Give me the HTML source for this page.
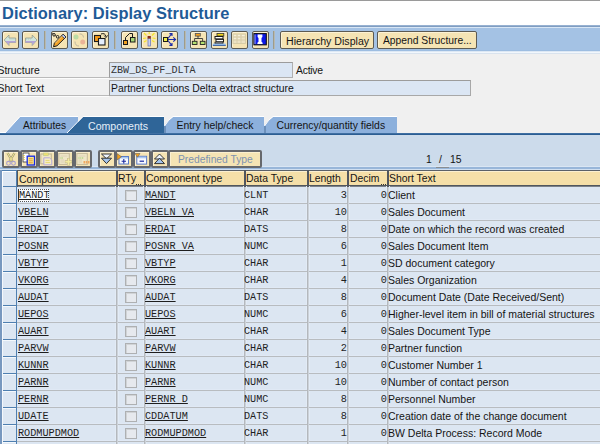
<!DOCTYPE html><html><head><meta charset="utf-8"><style>
*{margin:0;padding:0;box-sizing:border-box}
html,body{width:600px;height:444px;overflow:hidden;background:#f0f0f0;font-family:"Liberation Sans",sans-serif;position:relative}
.a{position:absolute}
.t{position:absolute;white-space:nowrap;font-size:10.4px;line-height:20px;color:#141414}
.m{position:absolute;white-space:nowrap;font-family:"Liberation Mono",monospace;font-size:11px;line-height:20px;color:#1e1e1e;transform-origin:0 0;transform:scaleX(0.927)}
.mr{transform-origin:100% 0}
.u{text-decoration:underline}
.btn{position:absolute;top:31px;width:17px;height:18px;background:#f5e4b4;border:1px solid #5c5a52;border-radius:2px;box-shadow:inset 1px 1px 0 #fcf2d4}
.sep{position:absolute;top:31px;width:1px;height:18px;background:#9e9c8a;box-shadow:1px 0 0 #b6b9b4}
.tb{position:absolute;top:150px;width:18px;height:18px;background:#f5e4b4;border:2px solid #66686c;border-radius:2px;box-shadow:inset 1px 1px 0 #fbf0d0}
.tb svg,.btn svg{position:absolute;left:0;top:0}
.cb{position:absolute;width:12px;height:11px;background:#e6e9ee;border:1px solid #aeb0b2;box-shadow:inset 1px 1px 0 #d0d3d6}
</style></head><body>
<div class="a" style="left:0;top:0;width:600px;height:1px;background:#9a9a9a"></div>
<div class="a" style="left:0;top:1px;width:600px;height:24px;background:#fff"></div>
<div class="a" style="left:2px;top:3px;font-weight:bold;font-size:16.4px;letter-spacing:0.05px;line-height:20px;color:#1f5b97;white-space:nowrap">Dictionary: Display Structure</div>
<div class="a" style="left:0;top:25px;width:600px;height:1px;background:#98b2d2"></div>
<div class="a" style="left:0;top:26px;width:600px;height:1px;background:#7f9dc1"></div>
<div class="a" style="left:0;top:27px;width:600px;height:1px;background:#d8e6f5"></div>
<div class="a" style="left:0;top:28px;width:600px;height:22px;background:#a4c2e4"></div>
<div class="a" style="left:0;top:50px;width:600px;height:1px;background:#9dbde1"></div>
<div class="a" style="left:0;top:51px;width:600px;height:1px;background:#dde8f4"></div>
<div class="a" style="left:0;top:52px;width:600px;height:1px;background:#f2f7fc"></div>
<div class="a" style="left:0;top:53px;width:600px;height:1px;background:#d9e3ee"></div>
<div class="btn" style="left:2px;width:17px"><svg width="15" height="16"><path d="M1.2,8 L6,3 L6,6 L12.7,6 L12.7,10.5 L6,10.5 L6,13.5 Z" fill="#d2e6dc" stroke="#8a9488" stroke-width="0.7"/><path d="M2.2,9 L6,13 L6,10.5 L12.7,10.5 L12.7,9 Z" fill="#b4a4d8"/><path d="M6.5,7 L12,7" stroke="#a8b8b0" stroke-width="0.6" stroke-dasharray="1,1"/></svg></div>
<div class="btn" style="left:22px;width:17px"><svg width="15" height="16"><path d="M14,8 L9.2,3 L9.2,6 L2.5,6 L2.5,10.5 L9.2,10.5 L9.2,13.5 Z" fill="#d2e6dc" stroke="#8a9488" stroke-width="0.7"/><path d="M13,9 L9.2,13 L9.2,10.5 L2.5,10.5 L2.5,9 Z" fill="#b4a4d8"/><path d="M3,7 L8.5,7" stroke="#a8b8b0" stroke-width="0.6" stroke-dasharray="1,1"/></svg></div>
<div class="btn" style="left:51px;width:17px"><svg width="15" height="16"><path d="M11.2,2.2 L14,5 L5,13.8 L1.5,14.8 L2.4,11.2 Z" fill="#f4a428" stroke="#222" stroke-width="1"/><path d="M11.2,2.2 L14,5 L12.4,6.6 L9.6,3.8 Z" fill="#b8c8f0" stroke="#222" stroke-width="0.8"/><path d="M3.5,11 L10.5,4" stroke="#ffd890" stroke-width="0.8"/><circle cx="2" cy="2.8" r="1.3" fill="none" stroke="#222" stroke-width="1"/><circle cx="5.6" cy="4.8" r="1.3" fill="none" stroke="#222" stroke-width="1"/><path d="M3.2,3.5 L4.4,4.2 M0,1.5 L1,2" stroke="#222" stroke-width="0.9"/></svg></div>
<div class="btn" style="left:71px;width:17px"><svg width="15" height="16"><circle cx="4" cy="5" r="2.5" fill="#bcdca4"/><circle cx="10.7" cy="10" r="2.5" fill="#eab498"/><path d="M7.5,2 Q11,1.5 11.5,5.5 M7,14 Q3,14 3,9.5" stroke="#bab4a0" stroke-width="0.9" fill="none"/></svg></div>
<div class="btn" style="left:92px;width:17px"><svg width="15" height="16"><rect x="1.5" y="3.5" width="6" height="6" fill="#f49a18" stroke="#1a1a1a" stroke-width="1.1"/><rect x="5.5" y="6.5" width="6.5" height="6.5" fill="#e4eefc" stroke="#1a1a1a" stroke-width="1.1"/><path d="M8,2 Q12,0.5 13,4.5" stroke="#1a1a1a" stroke-width="1" fill="none"/><path d="M11.2,3.6 L13,5.6 L14.6,3.4" stroke="#1a1a1a" stroke-width="0.9" fill="none"/></svg></div>
<div class="btn" style="left:121px;width:17px"><svg width="15" height="16"><rect x="1.5" y="8.5" width="4" height="4" fill="#f0a020" stroke="#1a1a1a" stroke-width="1"/><rect x="8.5" y="5.5" width="4.5" height="4.5" fill="#a8d878" stroke="#1a1a1a" stroke-width="1"/><path d="M3.5,8.5 L3.5,5.5 L7.5,1.5 L10.5,1.5 L10.5,5.5" stroke="#1a1a1a" stroke-width="1" fill="none"/></svg></div>
<div class="btn" style="left:141px;width:17px"><svg width="15" height="16"><path d="M2,1 L4.5,3.5 M12.5,1 L10,3.5 M1,6.5 L4,6 M13.5,6.5 L10.5,6 M2,10 L4.5,8.5 M12.5,10 L10,8.5 M7.2,0 L7.2,2" stroke="#f4e428" stroke-width="1.1"/><rect x="6" y="6" width="2.5" height="8" fill="#c8d0f0" stroke="#6070b8" stroke-width="0.7"/><rect x="5.6" y="4" width="3.2" height="2.6" fill="#8a3018"/></svg></div>
<div class="btn" style="left:161px;width:17px"><svg width="15" height="16"><path d="M5.5,7.5 L13.5,7.5 M11.3,5.3 L13.6,7.5 L11.3,9.7 M5.5,7 L9.6,1.8 M7.4,1.6 L10,1.5 L10,4.1 M5.5,8 L9.6,13.2 M7.4,13.4 L10,13.5 L10,10.9" stroke="#1c2ca8" stroke-width="1.1" fill="none"/><rect x="1.5" y="5.5" width="4" height="4" fill="#f0ec48" stroke="#1a1a1a" stroke-width="1"/></svg></div>
<div class="btn" style="left:190px;width:17px"><svg width="15" height="16"><rect x="4.3" y="1.5" width="5" height="2.6" fill="#f4a020" stroke="#555" stroke-width="0.8"/><path d="M7,4 L7,6.5 M3.6,6.5 L11.6,6.5 M3.6,6.5 L3.6,9.3 M11.6,6.5 L11.6,9.3" stroke="#333" stroke-width="0.9" fill="none"/><rect x="1.3" y="9.3" width="4.7" height="3.2" fill="#b4e070" stroke="#222" stroke-width="0.9"/><rect x="9.3" y="9.3" width="4.7" height="3.2" fill="#b4e070" stroke="#222" stroke-width="0.9"/></svg></div>
<div class="btn" style="left:211px;width:17px"><svg width="15" height="16"><rect x="5" y="1.5" width="6.8" height="2.5" fill="#f4d818" stroke="#333" stroke-width="0.8"/><rect x="3" y="4.5" width="8" height="2.4" fill="#fff" stroke="#1a1a1a" stroke-width="1"/><rect x="4" y="7.4" width="7.5" height="2.4" fill="#fff" stroke="#1a1a1a" stroke-width="1"/><rect x="3" y="10.2" width="8" height="1.4" fill="#fff" stroke="#1a1a1a" stroke-width="0.8"/><rect x="0.8" y="11.6" width="13" height="1.6" fill="#9cc4f0"/><path d="M0.8,13.4 L13.8,13.4" stroke="#2050a0" stroke-width="0.9"/></svg></div>
<div class="btn" style="left:231px;width:17px"><svg width="15" height="16"><rect x="1" y="2" width="12.5" height="9.5" fill="#ece2c4" stroke="#d6caa4" stroke-width="0.9"/><path d="M1,5 L13.5,5 M1,8 L13.5,8 M5,2 L5,11.5 M9,2 L9,11.5" stroke="#d6caa4" stroke-width="0.8"/><path d="M2,3.5 L4,3.5 M6,3.5 L8,3.5 M10,3.5 L12.5,3.5 M2,6.5 L4,6.5 M6,6.5 L8,6.5" stroke="#f8f2e0" stroke-width="0.8"/></svg></div>
<div class="btn" style="left:252px;width:17px"><svg width="15" height="16"><rect x="0.9" y="1.6" width="12.4" height="11.2" fill="#0c18e8" stroke="#101018" stroke-width="1.1"/><path d="M2,2.5 L2,12" stroke="#c8d4f8" stroke-width="0.8"/><path d="M4.6,2.6 L9.4,2.6 L9.4,5 L8.5,6 L8.5,9.8 L9.6,10.8 L9.6,12 L4.4,12 L4.4,10.8 L5.5,9.8 L5.5,6 L4.6,5 Z" fill="#fff"/></svg></div>
<div class="sep" style="left:44px"></div>
<div class="sep" style="left:114px"></div>
<div class="sep" style="left:184px"></div>
<div class="sep" style="left:273px"></div>
<div class="btn" style="left:280px;width:94px"></div>
<div class="t" style="left:286px;top:31px;font-size:10.62px">Hierarchy Display</div>
<div class="btn" style="left:377px;width:100px"></div>
<div class="t" style="left:383px;top:31px;font-size:10.3px">Append Structure...</div>
<div class="t" style="left:-2.5px;top:61px">Structure</div>
<div class="a" style="left:0;top:77px;width:109px;height:1px;background:#bababa"></div>
<div class="a" style="left:0;top:78px;width:109px;height:1px;background:#fcfcfc"></div>
<div class="a" style="left:109px;top:62px;width:184px;height:16px;background:#dbe6f4;border:1px solid #9c9c9c;border-right-color:#b0b0b0;border-bottom-color:#b0b0b0"></div>
<div class="m" style="left:111px;top:59.5px;font-size:11.2px;color:#333;transform:scaleX(0.9)">ZBW_DS_PF_DLTA</div>
<div class="t" style="left:296px;top:61px;letter-spacing:-0.25px">Active</div>
<div class="t" style="left:-2.5px;top:79px">Short Text</div>
<div class="a" style="left:0;top:95px;width:109px;height:1px;background:#bababa"></div>
<div class="a" style="left:0;top:96px;width:109px;height:1px;background:#fcfcfc"></div>
<div class="a" style="left:109px;top:80px;width:362px;height:16px;background:#dbe6f4;border:1px solid #9c9c9c;border-right-color:#a8a8a8;border-bottom-color:#a8a8a8"></div>
<div class="t" style="left:111px;top:79px;font-size:10.38px">Partner functions Delta extract structure</div>
<div class="a" style="left:0;top:133px;width:600px;height:1px;background:#3f6fa2"></div>
<div class="a" style="left:0;top:134px;width:600px;height:1px;background:#2b5d92"></div>
<div class="a" style="left:0;top:135px;width:600px;height:309px;background:#ccdbeb"></div>
<svg class="a" style="left:0;top:115px" width="600" height="20">
<path d="M0,17.5 L5,17.5" stroke="#fff" stroke-width="1"/>
<polygon points="5,18 20,2 78,2 78,18" fill="#8cb0dc"/>
<path d="M5,18 L20,1.5 L78,1.5" stroke="#fff" stroke-width="1" fill="none"/>
<path d="M164,18 L164,11 Q168,5 173,2 L264,2 L264,18 Z" fill="#8cb0dc"/>
<path d="M164.5,11 Q168.5,4.5 173,1.5 L264,1.5" stroke="#fff" stroke-width="1" fill="none"/>
<rect x="164" y="11" width="2" height="7" fill="#6b8fba"/>
<path d="M264,18 L264,11 Q268,5 273,2 L397,2 L397,18 Z" fill="#8cb0dc"/>
<path d="M264.5,11 Q268.5,4.5 273,1.5 L397,1.5" stroke="#fff" stroke-width="1" fill="none"/>
<rect x="264" y="11" width="2" height="7" fill="#6b8fba"/>
<polygon points="67,18 83,2 164,2 164,18" fill="#2f6598"/>
<path d="M67,18 L83,1.5 L164,1.5" stroke="#fff" stroke-width="1" fill="none"/>
<path d="M70,15 L78,7" stroke="#8cb0dc" stroke-width="0.8" stroke-dasharray="1,1" opacity="0.6"/>
</svg>
<div class="t" style="left:23px;top:116px;font-size:10.2px">Attributes</div>
<div class="t" style="left:88px;top:116px;color:#e4eef9;font-size:10.6px">Components</div>
<div class="t" style="left:176.5px;top:116px;font-size:10.42px">Entry help/check</div>
<div class="t" style="left:276.5px;top:116px;font-size:10.4px">Currency/quantity fields</div>
<div class="a" style="left:0;top:166px;width:600px;height:1px;background:#dae6f3"></div>
<div class="a" style="left:0;top:167px;width:600px;height:2px;background:#98b6d9"></div>
<div class="a" style="left:0;top:169px;width:600px;height:1px;background:#d0dff0"></div>
<div class="tb" style="left:2px"><svg width="14" height="14"><path d="M3.5,1 L8.5,9.5 M10.5,1 L5.5,9.5" stroke="#9a9478" stroke-width="2.2"/><path d="M3.5,1 L8.5,9.5 M10.5,1 L5.5,9.5" stroke="#f4e890" stroke-width="1"/><circle cx="4.5" cy="11.3" r="1.9" fill="none" stroke="#a8a0d0" stroke-width="1.1"/><circle cx="9.5" cy="11.3" r="1.9" fill="none" stroke="#a8a0d0" stroke-width="1.1"/></svg></div>
<div class="tb" style="left:20px"><svg width="14" height="14"><rect x="1" y="1" width="6" height="9" fill="#fff" stroke="#333" stroke-width="0.8"/><path d="M2,3 L2,9" stroke="#e0c020" stroke-width="1.2" stroke-dasharray="1,1"/><rect x="5.2" y="4.2" width="7.3" height="8.8" fill="#f6e890" stroke="#1428e8" stroke-width="1.3"/><path d="M6.8,6.8 L10.8,6.8 M6.8,8.8 L10.8,8.8 M6.8,10.8 L10.8,10.8" stroke="#e09030" stroke-width="0.9"/></svg></div>
<div class="tb" style="left:38px"><svg width="14" height="14"><rect x="0.8" y="2" width="10.5" height="9.8" fill="#f0e6c4" stroke="#c4b894" stroke-width="1.1"/><rect x="3.5" y="1" width="5" height="2.6" fill="#f0e070" stroke="#b8c890" stroke-width="0.6"/><path d="M3.8,5.8 L3.8,12.8 L11.8,12.8 L11.8,8 L9.5,5.8 Z" fill="#f4ecc4" stroke="#b4a8dc" stroke-width="1"/><path d="M5.5,8.5 L9.5,8.5 M5.5,10.5 L10,10.5" stroke="#e8d870" stroke-width="0.9"/></svg></div>
<div class="tb" style="left:56px"><svg width="14" height="14"><rect x="0.8" y="1.5" width="10.5" height="11" fill="#efe6c8" stroke="#c8bc9c" stroke-width="1.1"/><path d="M2.5,4 L9.5,4" stroke="#d8ccb0" stroke-width="0.8"/><path d="M2.5,6 L5,6" stroke="#90cc60" stroke-width="1.1" stroke-dasharray="1,0.8"/><path d="M2.5,8 L6,8 M2.5,10 L6,10" stroke="#d8ccb0" stroke-width="0.8"/><path d="M10.5,6 L10.5,13.5 M6.8,9.8 L14,9.8" stroke="#c8bc90" stroke-width="3"/><path d="M10.5,6.5 L10.5,13 M7.3,9.8 L13.5,9.8" stroke="#f4eca0" stroke-width="1.6"/></svg></div>
<div class="tb" style="left:74px"><svg width="14" height="14"><rect x="0.8" y="1.5" width="10.5" height="11" fill="#efe6c8" stroke="#c8bc9c" stroke-width="1.1"/><path d="M2.5,4 L9.5,4" stroke="#d8ccb0" stroke-width="0.8"/><path d="M2.5,6 L8,6" stroke="#90cc60" stroke-width="1.1" stroke-dasharray="1,0.8"/><path d="M2.5,8 L6,8 M2.5,10 L6,10" stroke="#d8ccb0" stroke-width="0.8"/><path d="M7.5,10.2 L14,10.2" stroke="#f0a860" stroke-width="2.4" stroke-dasharray="1.6,0.6"/></svg></div>
<div class="tb" style="left:98px"><svg width="14" height="14"><path d="M1.5,2 L11.5,2 L6.5,6.8 Z" fill="#eef4fc" stroke="#222" stroke-width="0.9"/><path d="M1.5,6.2 L11.5,6.2 L6.5,11.6 Z" fill="#a4c4ec" stroke="#222" stroke-width="0.9"/></svg></div>
<div class="tb" style="left:115px"><svg width="14" height="14"><rect x="2" y="4.5" width="9.5" height="7.5" fill="#f8faff" stroke="#5a7cc8" stroke-width="1"/><rect x="2.5" y="5" width="8.5" height="1.5" fill="#a8c8f0"/><path d="M6.8,7 L6.8,11.5 M4.6,9.2 L9,9.2" stroke="#1a2aa0" stroke-width="1.1"/><path d="M0,1.5 L4.5,4.8 L0,8 Z" fill="#f0a020" stroke="#555" stroke-width="0.5"/></svg></div>
<div class="tb" style="left:133px"><svg width="14" height="14"><rect x="1.8" y="4.3" width="9.8" height="7.8" fill="#f8faff" stroke="#5a7cc8" stroke-width="1"/><rect x="2.3" y="4.8" width="8.8" height="1.5" fill="#a8c8f0"/><path d="M4.6,9.2 L9,9.2" stroke="#1a2aa0" stroke-width="1.2"/><path d="M0,1.5 L5,1.5 L2.5,5.3 Z" fill="#f0a020" stroke="#555" stroke-width="0.5"/></svg></div>
<div class="tb" style="left:151px"><svg width="14" height="14"><path d="M1.5,7 L11.5,7 L6.5,2 Z" fill="#eef4fc" stroke="#222" stroke-width="0.9"/><path d="M1.5,11.6 L11.5,11.6 L6.5,6.2 Z" fill="#a4c4ec" stroke="#222" stroke-width="0.9"/></svg></div>
<div class="tb" style="left:168px;width:94px"></div>
<div class="t" style="left:178px;top:150px;color:#7d93b0;font-size:10.3px">Predefined Type</div>
<div class="t" style="left:426px;top:150px">1</div>
<div class="t" style="left:439px;top:150px">/</div>
<div class="t" style="left:450px;top:150px">15</div>
<div class="a" style="left:436px;top:167px;width:13px;height:1px;background:#8a8e92"></div>
<div class="a" style="left:0;top:170px;width:600px;height:17px;background:#f5dfa8;border-top:1px solid #5a6068;border-bottom:2px solid #50565e"></div>
<div class="a" style="left:0;top:186px;width:600px;height:1px;background:#7c828a"></div>
<div class="a" style="left:17px;top:171px;width:583px;height:1px;background:#fbefd0"></div>
<div class="a" style="left:0;top:187px;width:600px;height:257px;background:#dce6f2"></div>
<div class="a" style="left:0;top:170px;width:2px;height:274px;background:#7898bf"></div>
<div class="a" style="left:2px;top:170px;width:14px;height:17px;background:#dce6f2;border-top:1px solid #4f7fb0;border-bottom:1px solid #4f7fb0;box-shadow:inset 1px 1px 0 #fff"></div>
<div class="a" style="left:16px;top:170px;width:1px;height:274px;background:#4f7fb0"></div>
<div class="a" style="left:115px;top:186px;width:4px;height:258px;background:#e2ebf6"></div>
<div class="a" style="left:143px;top:186px;width:4px;height:258px;background:#e2ebf6"></div>
<div class="a" style="left:243px;top:186px;width:4px;height:258px;background:#e2ebf6"></div>
<div class="a" style="left:306px;top:186px;width:4px;height:258px;background:#e2ebf6"></div>
<div class="a" style="left:346px;top:186px;width:4px;height:258px;background:#e2ebf6"></div>
<div class="a" style="left:386px;top:186px;width:4px;height:258px;background:#e2ebf6"></div>
<div class="a" style="left:17px;top:202px;width:583px;height:1px;background:#e0e9f5"></div>
<div class="a" style="left:17px;top:203px;width:583px;height:1px;background:#b8bcc0"></div>
<div class="a" style="left:2px;top:203px;width:14px;height:1px;background:#4f7fb0"></div>
<div class="a" style="left:3px;top:204px;width:13px;height:1px;background:#f4f8fc"></div>
<div class="a" style="left:17px;top:219px;width:583px;height:1px;background:#e0e9f5"></div>
<div class="a" style="left:17px;top:220px;width:583px;height:1px;background:#b8bcc0"></div>
<div class="a" style="left:2px;top:220px;width:14px;height:1px;background:#4f7fb0"></div>
<div class="a" style="left:3px;top:221px;width:13px;height:1px;background:#f4f8fc"></div>
<div class="a" style="left:17px;top:236px;width:583px;height:1px;background:#e0e9f5"></div>
<div class="a" style="left:17px;top:237px;width:583px;height:1px;background:#b8bcc0"></div>
<div class="a" style="left:2px;top:237px;width:14px;height:1px;background:#4f7fb0"></div>
<div class="a" style="left:3px;top:238px;width:13px;height:1px;background:#f4f8fc"></div>
<div class="a" style="left:17px;top:253px;width:583px;height:1px;background:#e0e9f5"></div>
<div class="a" style="left:17px;top:254px;width:583px;height:1px;background:#b8bcc0"></div>
<div class="a" style="left:2px;top:254px;width:14px;height:1px;background:#4f7fb0"></div>
<div class="a" style="left:3px;top:255px;width:13px;height:1px;background:#f4f8fc"></div>
<div class="a" style="left:17px;top:270px;width:583px;height:1px;background:#e0e9f5"></div>
<div class="a" style="left:17px;top:271px;width:583px;height:1px;background:#b8bcc0"></div>
<div class="a" style="left:2px;top:271px;width:14px;height:1px;background:#4f7fb0"></div>
<div class="a" style="left:3px;top:272px;width:13px;height:1px;background:#f4f8fc"></div>
<div class="a" style="left:17px;top:287px;width:583px;height:1px;background:#e0e9f5"></div>
<div class="a" style="left:17px;top:288px;width:583px;height:1px;background:#b8bcc0"></div>
<div class="a" style="left:2px;top:288px;width:14px;height:1px;background:#4f7fb0"></div>
<div class="a" style="left:3px;top:289px;width:13px;height:1px;background:#f4f8fc"></div>
<div class="a" style="left:17px;top:304px;width:583px;height:1px;background:#e0e9f5"></div>
<div class="a" style="left:17px;top:305px;width:583px;height:1px;background:#b8bcc0"></div>
<div class="a" style="left:2px;top:305px;width:14px;height:1px;background:#4f7fb0"></div>
<div class="a" style="left:3px;top:306px;width:13px;height:1px;background:#f4f8fc"></div>
<div class="a" style="left:17px;top:321px;width:583px;height:1px;background:#e0e9f5"></div>
<div class="a" style="left:17px;top:322px;width:583px;height:1px;background:#b8bcc0"></div>
<div class="a" style="left:2px;top:322px;width:14px;height:1px;background:#4f7fb0"></div>
<div class="a" style="left:3px;top:323px;width:13px;height:1px;background:#f4f8fc"></div>
<div class="a" style="left:17px;top:338px;width:583px;height:1px;background:#e0e9f5"></div>
<div class="a" style="left:17px;top:339px;width:583px;height:1px;background:#b8bcc0"></div>
<div class="a" style="left:2px;top:339px;width:14px;height:1px;background:#4f7fb0"></div>
<div class="a" style="left:3px;top:340px;width:13px;height:1px;background:#f4f8fc"></div>
<div class="a" style="left:17px;top:355px;width:583px;height:1px;background:#e0e9f5"></div>
<div class="a" style="left:17px;top:356px;width:583px;height:1px;background:#b8bcc0"></div>
<div class="a" style="left:2px;top:356px;width:14px;height:1px;background:#4f7fb0"></div>
<div class="a" style="left:3px;top:357px;width:13px;height:1px;background:#f4f8fc"></div>
<div class="a" style="left:17px;top:372px;width:583px;height:1px;background:#e0e9f5"></div>
<div class="a" style="left:17px;top:373px;width:583px;height:1px;background:#b8bcc0"></div>
<div class="a" style="left:2px;top:373px;width:14px;height:1px;background:#4f7fb0"></div>
<div class="a" style="left:3px;top:374px;width:13px;height:1px;background:#f4f8fc"></div>
<div class="a" style="left:17px;top:389px;width:583px;height:1px;background:#e0e9f5"></div>
<div class="a" style="left:17px;top:390px;width:583px;height:1px;background:#b8bcc0"></div>
<div class="a" style="left:2px;top:390px;width:14px;height:1px;background:#4f7fb0"></div>
<div class="a" style="left:3px;top:391px;width:13px;height:1px;background:#f4f8fc"></div>
<div class="a" style="left:17px;top:406px;width:583px;height:1px;background:#e0e9f5"></div>
<div class="a" style="left:17px;top:407px;width:583px;height:1px;background:#b8bcc0"></div>
<div class="a" style="left:2px;top:407px;width:14px;height:1px;background:#4f7fb0"></div>
<div class="a" style="left:3px;top:408px;width:13px;height:1px;background:#f4f8fc"></div>
<div class="a" style="left:17px;top:423px;width:583px;height:1px;background:#e0e9f5"></div>
<div class="a" style="left:17px;top:424px;width:583px;height:1px;background:#b8bcc0"></div>
<div class="a" style="left:2px;top:424px;width:14px;height:1px;background:#4f7fb0"></div>
<div class="a" style="left:3px;top:425px;width:13px;height:1px;background:#f4f8fc"></div>
<div class="a" style="left:17px;top:440px;width:583px;height:1px;background:#e0e9f5"></div>
<div class="a" style="left:17px;top:441px;width:583px;height:1px;background:#b8bcc0"></div>
<div class="a" style="left:2px;top:441px;width:14px;height:1px;background:#4f7fb0"></div>
<div class="a" style="left:3px;top:442px;width:13px;height:1px;background:#f4f8fc"></div>
<div class="a" style="left:2px;top:186px;width:1px;height:258px;background:#f4f8fc"></div>
<div class="a" style="left:116px;top:170px;width:2px;height:17px;background:#50565e"></div>
<div class="a" style="left:116px;top:187px;width:1px;height:258px;background:#b4b8bd"></div>
<div class="a" style="left:117px;top:187px;width:1px;height:258px;background:#ccd2d9"></div>
<div class="a" style="left:144px;top:170px;width:2px;height:17px;background:#50565e"></div>
<div class="a" style="left:144px;top:187px;width:1px;height:258px;background:#b4b8bd"></div>
<div class="a" style="left:145px;top:187px;width:1px;height:258px;background:#ccd2d9"></div>
<div class="a" style="left:244px;top:170px;width:2px;height:17px;background:#50565e"></div>
<div class="a" style="left:244px;top:187px;width:1px;height:258px;background:#b4b8bd"></div>
<div class="a" style="left:245px;top:187px;width:1px;height:258px;background:#ccd2d9"></div>
<div class="a" style="left:307px;top:170px;width:2px;height:17px;background:#50565e"></div>
<div class="a" style="left:307px;top:187px;width:1px;height:258px;background:#b4b8bd"></div>
<div class="a" style="left:308px;top:187px;width:1px;height:258px;background:#ccd2d9"></div>
<div class="a" style="left:347px;top:170px;width:2px;height:17px;background:#50565e"></div>
<div class="a" style="left:347px;top:187px;width:1px;height:258px;background:#b4b8bd"></div>
<div class="a" style="left:348px;top:187px;width:1px;height:258px;background:#ccd2d9"></div>
<div class="a" style="left:387px;top:170px;width:2px;height:17px;background:#50565e"></div>
<div class="a" style="left:387px;top:187px;width:1px;height:258px;background:#b4b8bd"></div>
<div class="a" style="left:388px;top:187px;width:1px;height:258px;background:#ccd2d9"></div>
<div class="a" style="left:17px;top:170px;width:1px;height:17px;background:#50565e"></div>
<div class="t" style="left:19px;top:168.5px;font-size:10.5px">Component</div>
<div class="t" style="left:118px;top:168.5px;font-size:10.4px">RTy</div>
<div class="t" style="left:146px;top:168.5px;font-size:10.4px">Component type</div>
<div class="t" style="left:246px;top:168.5px;font-size:10.4px">Data Type</div>
<div class="t" style="left:309px;top:168.5px;font-size:10.4px">Length</div>
<div class="t" style="left:350px;top:168.5px;font-size:10.4px">Decim</div>
<div class="t" style="left:389px;top:168.5px;font-size:10.4px">Short Text</div>
<div class="a" style="left:136px;top:184px;width:6px;height:1px;background:repeating-linear-gradient(90deg,#333 0 1px,transparent 1px 2px)"></div>
<div class="a" style="left:381px;top:184px;width:6px;height:1px;background:repeating-linear-gradient(90deg,#333 0 1px,transparent 1px 2px)"></div>
<div class="a" style="left:18px;top:189px;width:31px;height:13px;background:#fafcfe;border:1px dotted #555;border-left:1px solid #3a3428"></div>
<div class="m u" style="left:19px;top:185px">MANDT</div>
<div class="cb" style="left:125px;top:190px"></div>
<div class="m u" style="left:145px;top:185px;white-space:pre">MANDT</div>
<div class="m" style="left:244px;top:185px">CLNT</div>
<div class="m mr" style="left:247px;top:185px;width:100px;text-align:right;font-size:10.8px;transform:scaleX(0.95)">3</div>
<div class="m mr" style="left:287px;top:185px;width:100px;text-align:right;font-size:10.8px;transform:scaleX(0.95)">0</div>
<div class="t" style="left:388px;top:185px;font-size:10.5px">Client</div>
<div class="m u" style="left:17.5px;top:202px">VBELN</div>
<div class="cb" style="left:125px;top:207px"></div>
<div class="m u" style="left:145px;top:202px;white-space:pre">VBELN VA</div>
<div class="m" style="left:244px;top:202px">CHAR</div>
<div class="m mr" style="left:247px;top:202px;width:100px;text-align:right;font-size:10.8px;transform:scaleX(0.95)">10</div>
<div class="m mr" style="left:287px;top:202px;width:100px;text-align:right;font-size:10.8px;transform:scaleX(0.95)">0</div>
<div class="t" style="left:388px;top:202px;font-size:10.5px">Sales Document</div>
<div class="m u" style="left:17.5px;top:219px">ERDAT</div>
<div class="cb" style="left:125px;top:224px"></div>
<div class="m u" style="left:145px;top:219px;white-space:pre">ERDAT</div>
<div class="m" style="left:244px;top:219px">DATS</div>
<div class="m mr" style="left:247px;top:219px;width:100px;text-align:right;font-size:10.8px;transform:scaleX(0.95)">8</div>
<div class="m mr" style="left:287px;top:219px;width:100px;text-align:right;font-size:10.8px;transform:scaleX(0.95)">0</div>
<div class="t" style="left:388px;top:219px;font-size:10.5px">Date on which the record was created</div>
<div class="m u" style="left:17.5px;top:236px">POSNR</div>
<div class="cb" style="left:125px;top:241px"></div>
<div class="m u" style="left:145px;top:236px;white-space:pre">POSNR VA</div>
<div class="m" style="left:244px;top:236px">NUMC</div>
<div class="m mr" style="left:247px;top:236px;width:100px;text-align:right;font-size:10.8px;transform:scaleX(0.95)">6</div>
<div class="m mr" style="left:287px;top:236px;width:100px;text-align:right;font-size:10.8px;transform:scaleX(0.95)">0</div>
<div class="t" style="left:388px;top:236px;font-size:10.5px">Sales Document Item</div>
<div class="m u" style="left:17.5px;top:253px">VBTYP</div>
<div class="cb" style="left:125px;top:258px"></div>
<div class="m u" style="left:145px;top:253px;white-space:pre">VBTYP</div>
<div class="m" style="left:244px;top:253px">CHAR</div>
<div class="m mr" style="left:247px;top:253px;width:100px;text-align:right;font-size:10.8px;transform:scaleX(0.95)">1</div>
<div class="m mr" style="left:287px;top:253px;width:100px;text-align:right;font-size:10.8px;transform:scaleX(0.95)">0</div>
<div class="t" style="left:388px;top:253px;font-size:10.5px">SD document category</div>
<div class="m u" style="left:17.5px;top:270px">VKORG</div>
<div class="cb" style="left:125px;top:275px"></div>
<div class="m u" style="left:145px;top:270px;white-space:pre">VKORG</div>
<div class="m" style="left:244px;top:270px">CHAR</div>
<div class="m mr" style="left:247px;top:270px;width:100px;text-align:right;font-size:10.8px;transform:scaleX(0.95)">4</div>
<div class="m mr" style="left:287px;top:270px;width:100px;text-align:right;font-size:10.8px;transform:scaleX(0.95)">0</div>
<div class="t" style="left:388px;top:270px;font-size:10.5px">Sales Organization</div>
<div class="m u" style="left:17.5px;top:287px">AUDAT</div>
<div class="cb" style="left:125px;top:292px"></div>
<div class="m u" style="left:145px;top:287px;white-space:pre">AUDAT</div>
<div class="m" style="left:244px;top:287px">DATS</div>
<div class="m mr" style="left:247px;top:287px;width:100px;text-align:right;font-size:10.8px;transform:scaleX(0.95)">8</div>
<div class="m mr" style="left:287px;top:287px;width:100px;text-align:right;font-size:10.8px;transform:scaleX(0.95)">0</div>
<div class="t" style="left:388px;top:287px;font-size:10.5px">Document Date (Date Received/Sent)</div>
<div class="m u" style="left:17.5px;top:304px">UEPOS</div>
<div class="cb" style="left:125px;top:309px"></div>
<div class="m u" style="left:145px;top:304px;white-space:pre">UEPOS</div>
<div class="m" style="left:244px;top:304px">NUMC</div>
<div class="m mr" style="left:247px;top:304px;width:100px;text-align:right;font-size:10.8px;transform:scaleX(0.95)">6</div>
<div class="m mr" style="left:287px;top:304px;width:100px;text-align:right;font-size:10.8px;transform:scaleX(0.95)">0</div>
<div class="t" style="left:388px;top:304px;font-size:10.5px">Higher-level item in bill of material structures</div>
<div class="m u" style="left:17.5px;top:321px">AUART</div>
<div class="cb" style="left:125px;top:326px"></div>
<div class="m u" style="left:145px;top:321px;white-space:pre">AUART</div>
<div class="m" style="left:244px;top:321px">CHAR</div>
<div class="m mr" style="left:247px;top:321px;width:100px;text-align:right;font-size:10.8px;transform:scaleX(0.95)">4</div>
<div class="m mr" style="left:287px;top:321px;width:100px;text-align:right;font-size:10.8px;transform:scaleX(0.95)">0</div>
<div class="t" style="left:388px;top:321px;font-size:10.5px">Sales Document Type</div>
<div class="m u" style="left:17.5px;top:338px">PARVW</div>
<div class="cb" style="left:125px;top:343px"></div>
<div class="m u" style="left:145px;top:338px;white-space:pre">PARVW</div>
<div class="m" style="left:244px;top:338px">CHAR</div>
<div class="m mr" style="left:247px;top:338px;width:100px;text-align:right;font-size:10.8px;transform:scaleX(0.95)">2</div>
<div class="m mr" style="left:287px;top:338px;width:100px;text-align:right;font-size:10.8px;transform:scaleX(0.95)">0</div>
<div class="t" style="left:388px;top:338px;font-size:10.5px">Partner function</div>
<div class="m u" style="left:17.5px;top:355px">KUNNR</div>
<div class="cb" style="left:125px;top:360px"></div>
<div class="m u" style="left:145px;top:355px;white-space:pre">KUNNR</div>
<div class="m" style="left:244px;top:355px">CHAR</div>
<div class="m mr" style="left:247px;top:355px;width:100px;text-align:right;font-size:10.8px;transform:scaleX(0.95)">10</div>
<div class="m mr" style="left:287px;top:355px;width:100px;text-align:right;font-size:10.8px;transform:scaleX(0.95)">0</div>
<div class="t" style="left:388px;top:355px;font-size:10.5px">Customer Number 1</div>
<div class="m u" style="left:17.5px;top:372px">PARNR</div>
<div class="cb" style="left:125px;top:377px"></div>
<div class="m u" style="left:145px;top:372px;white-space:pre">PARNR</div>
<div class="m" style="left:244px;top:372px">NUMC</div>
<div class="m mr" style="left:247px;top:372px;width:100px;text-align:right;font-size:10.8px;transform:scaleX(0.95)">10</div>
<div class="m mr" style="left:287px;top:372px;width:100px;text-align:right;font-size:10.8px;transform:scaleX(0.95)">0</div>
<div class="t" style="left:388px;top:372px;font-size:10.5px">Number of contact person</div>
<div class="m u" style="left:17.5px;top:389px">PERNR</div>
<div class="cb" style="left:125px;top:394px"></div>
<div class="m u" style="left:145px;top:389px;white-space:pre">PERNR D</div>
<div class="m" style="left:244px;top:389px">NUMC</div>
<div class="m mr" style="left:247px;top:389px;width:100px;text-align:right;font-size:10.8px;transform:scaleX(0.95)">8</div>
<div class="m mr" style="left:287px;top:389px;width:100px;text-align:right;font-size:10.8px;transform:scaleX(0.95)">0</div>
<div class="t" style="left:388px;top:389px;font-size:10.5px">Personnel Number</div>
<div class="m u" style="left:17.5px;top:406px">UDATE</div>
<div class="cb" style="left:125px;top:411px"></div>
<div class="m u" style="left:145px;top:406px;white-space:pre">CDDATUM</div>
<div class="m" style="left:244px;top:406px">DATS</div>
<div class="m mr" style="left:247px;top:406px;width:100px;text-align:right;font-size:10.8px;transform:scaleX(0.95)">8</div>
<div class="m mr" style="left:287px;top:406px;width:100px;text-align:right;font-size:10.8px;transform:scaleX(0.95)">0</div>
<div class="t" style="left:388px;top:406px;font-size:10.5px">Creation date of the change document</div>
<div class="m u" style="left:17.5px;top:423px">RODMUPDMOD</div>
<div class="cb" style="left:125px;top:428px"></div>
<div class="m u" style="left:145px;top:423px;white-space:pre">RODMUPDMOD</div>
<div class="m" style="left:244px;top:423px">CHAR</div>
<div class="m mr" style="left:247px;top:423px;width:100px;text-align:right;font-size:10.8px;transform:scaleX(0.95)">1</div>
<div class="m mr" style="left:287px;top:423px;width:100px;text-align:right;font-size:10.8px;transform:scaleX(0.95)">0</div>
<div class="t" style="left:388px;top:423px;font-size:10.5px">BW Delta Process: Record Mode</div>
</body></html>
